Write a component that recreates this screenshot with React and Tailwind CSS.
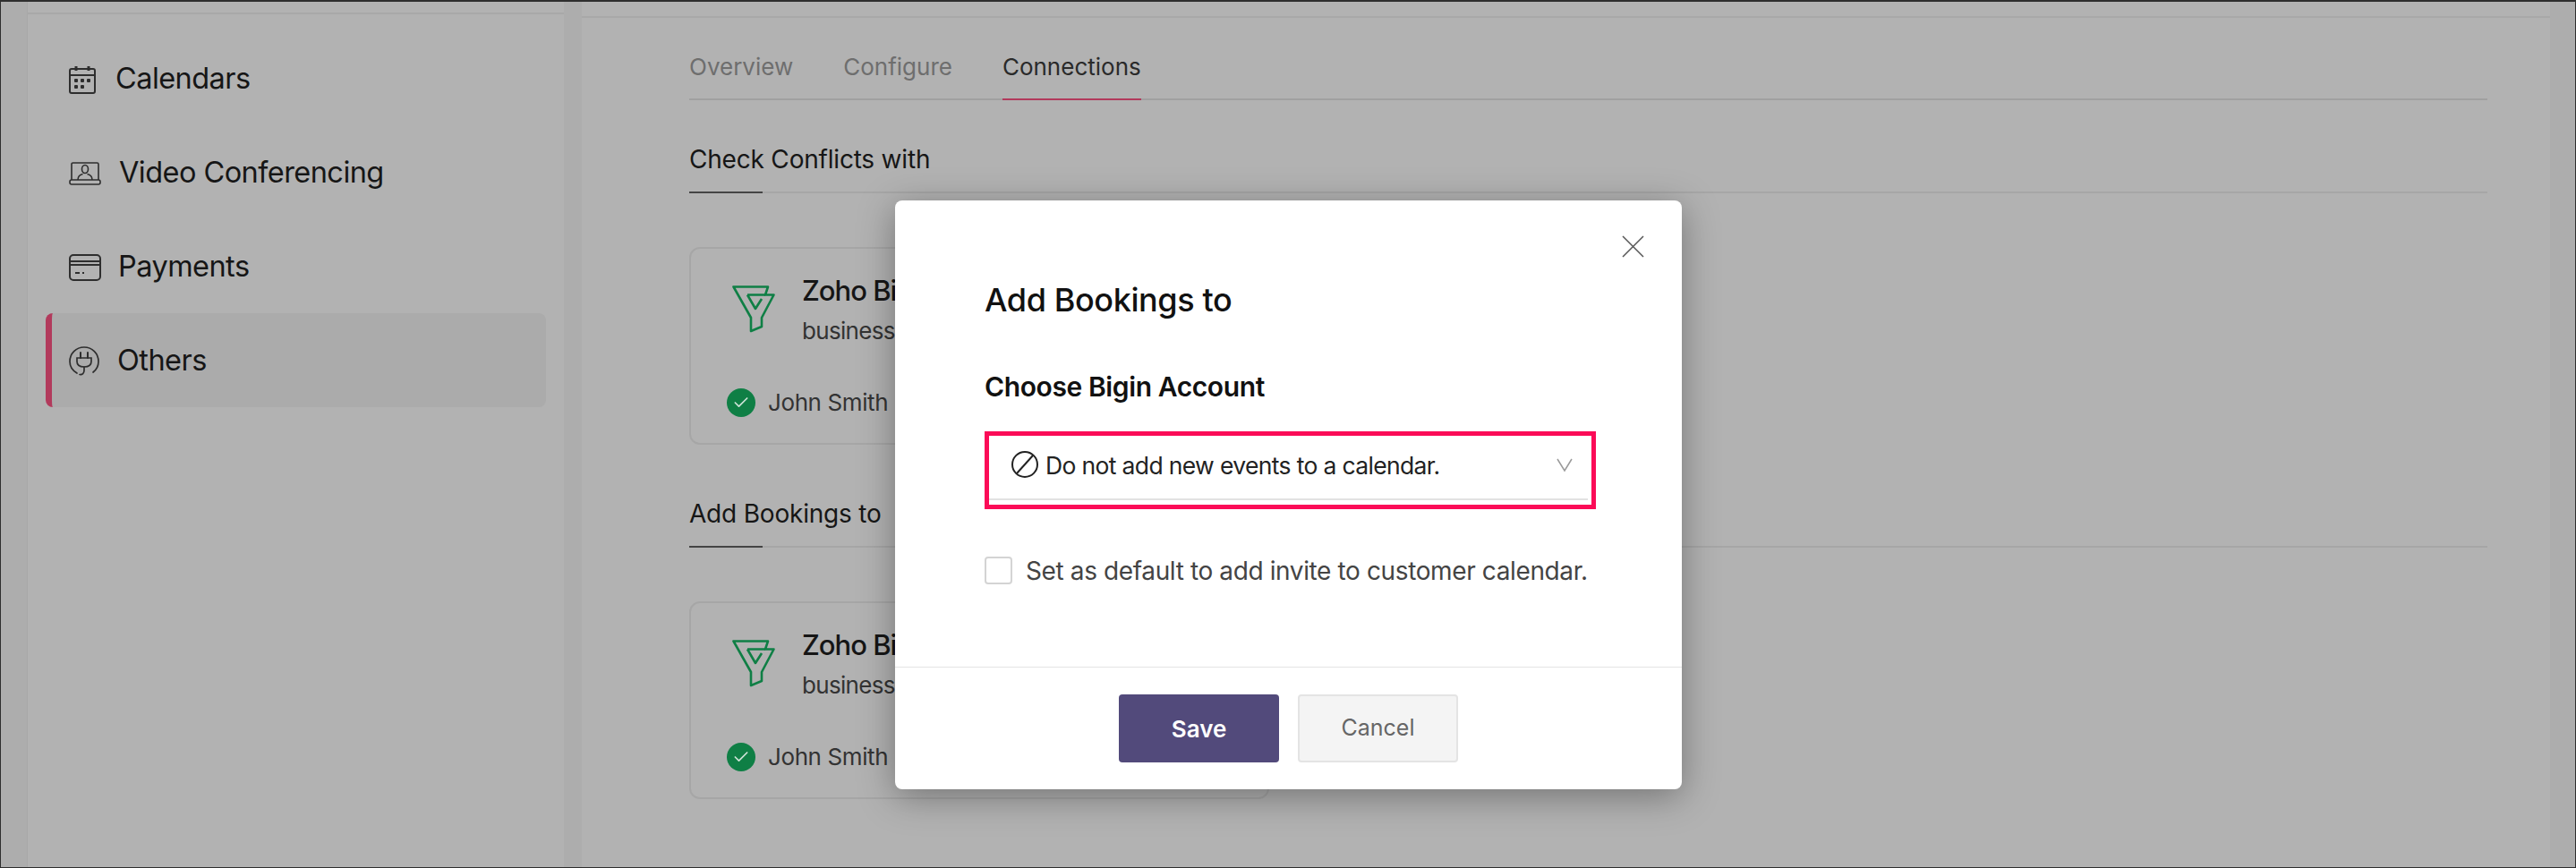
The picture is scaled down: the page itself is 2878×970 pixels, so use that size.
import { Check } from "lucide-react";

const fontStack = { fontFamily: "Inter, 'Liberation Sans', sans-serif" };

function CalendarIcon() {
  return (
    <svg width="30" height="32" viewBox="0 0 30 32" fill="none" stroke="#2e2e2e" strokeWidth="2">
      <rect x="1" y="4" width="28" height="27" rx="2" />
      <path d="M1 11h28" />
      <path d="M8 1v5M22 1v5" strokeWidth="3" />
      <g fill="#2e2e2e" stroke="none">
        <rect x="6" y="15" width="4" height="4" rx="1" />
        <rect x="13" y="15" width="4" height="4" rx="1" />
        <rect x="20" y="15" width="4" height="4" rx="1" />
        <rect x="6" y="22" width="4" height="4" rx="1" />
        <rect x="13" y="22" width="4" height="4" rx="1" />
      </g>
    </svg>
  );
}

function LaptopIcon() {
  return (
    <svg width="36" height="26" viewBox="0 0 36 26" fill="none" stroke="#2e2e2e" strokeWidth="1.6">
      <path d="M3 20V2.500A1.500 1.500 0 0 1 4.500 1h27A1.500 1.500 0 0 1 33 2.500V20" />
      <rect x="1" y="20" width="34" height="5" rx="2" />
      <ellipse cx="18" cy="8" rx="3.500" ry="4.500" />
      <path d="M10 20c0-4 3-6 5.500-6.500M26 20c0-4-3-6-5.500-6.500" />
    </svg>
  );
}

function CardIcon() {
  return (
    <svg width="36" height="30" viewBox="0 0 36 30" fill="none" stroke="#2e2e2e" strokeWidth="2">
      <rect x="1" y="1" width="34" height="28" rx="4" />
      <path d="M1 8h34M1 12h34" />
      <path d="M7 21h5M15 21h2" />
    </svg>
  );
}

function PlugIcon() {
  return (
    <svg width="34" height="33" viewBox="0 0 34 33" fill="none" stroke="#2e2e2e" strokeWidth="1.700" strokeLinecap="round">
      <path d="M9 30C4 27 1 22 1 17 1 8 8 1 17 1s16 7 16 16c0 5-2 9-6 12" />
      <path d="M13 7v6M21 7v6" strokeWidth="2" />
      <path d="M9 13h16v4c0 4-3 6-8 6s-8-2-8-6z" />
      <path d="M17 23v4c0 3-2 5-5 4.500" />
    </svg>
  );
}

function BiginLogo() {
  return (
    <svg width="48" height="54" viewBox="0 0 48 54" fill="none" stroke="#0f7f45" strokeWidth="2.600" strokeLinejoin="round">
      <path d="M1.500 2.500H40L37 11.500H46.500L33 37V47L21 52V37Z" />
      <path d="M17 11.500H37M17 11.500L26 27L33 16" />
    </svg>
  );
}

function SideItem({ icon, label, gap, active }) {
  return (
    <div className={`h-[105px] flex items-center rounded-lg pt-[2px] ${active ? "bg-[#ababab] border-l-[7px] border-[#b23a5c] pl-[19px]" : "pl-[26px]"}`}>
      {icon}
      <span className="text-[32.500px] tracking-[-0.55px] text-[#161616]" style={{ marginLeft: gap }}>{label}</span>
    </div>
  );
}

function SectionHead({ title }) {
  return (
    <div className="relative h-[61px] border-b-2 border-[#a6a6a6]">
      <span className="text-[28px] leading-[40px] tracking-[-0.2px] text-[#161616] block pt-[3px]">{title}</span>
      <div className="absolute left-0 -bottom-[2px] w-[82px] h-[2px] bg-[#444444]" />
    </div>
  );
}

function ConnCard() {
  return (
    <div className="w-[648px] h-[221px] mt-[60px] border-2 border-[#a6a6a6] rounded-xl pt-[27px] pl-[40px]">
      <div className="flex">
        <div className="w-[46px] pt-[13px] ml-[6px]"><BiginLogo /></div>
        <div className="ml-[32px]">
          <div className="text-[31px] leading-[40px] font-medium tracking-[-1px] text-[#161616]">Zoho Bigin</div>
          <div className="text-[26px] leading-[36px] mt-[7px] tracking-[-0.7px] text-[#333333]">business.bigin.com</div>
        </div>
      </div>
      <div className="flex items-center mt-[44px]">
        <div className="w-[32px] h-[32px] rounded-full bg-[#0f7f45] flex items-center justify-center">
          <Check size={20} color="#cfe3d8" strokeWidth={2} />
        </div>
        <span className="ml-[14px] text-[26px] leading-[36px] tracking-[-0.4px] text-[#333333]">John Smith</span>
      </div>
    </div>
  );
}

function Modal() {
  return (
    <div className="absolute left-[1000px] top-[224px] w-[879px] h-[658px] bg-white rounded-lg shadow-[0_8px_40px_rgba(0,0,0,0.35)]">
      <svg className="absolute left-[812px] top-[39px]" width="25" height="25" viewBox="0 0 25 25" stroke="#555555" strokeWidth="1.500">
        <path d="M1 1l23 23M24 1L1 24" />
      </svg>
      <div className="h-[522px] border-b border-[#e4e4e4] pl-[100px] pt-[87px]">
        <div className="text-[36px] leading-[48px] font-medium tracking-[-0.4px] text-[#111111]">Add Bookings to</div>
        <div className="text-[30px] leading-[40px] font-semibold tracking-[-0.4px] text-[#111111] mt-[53px]">Choose Bigin Account</div>
        <div className="relative w-[683px] h-[87px] mt-[30px] border-[5px] border-[#fb0b57] flex pl-[24px] pt-[17px]">
          <div className="absolute left-0 right-[4px] bottom-[5px] h-[2px] bg-[#e2e2e2]" />
          <svg width="32" height="30" viewBox="0 0 32 30" fill="none" stroke="#222222" strokeWidth="2">
            <circle cx="16" cy="15" r="14" />
            <path d="M7 25L25 5" />
          </svg>
          <span className="ml-[7px] text-[26.500px] leading-[32px] tracking-[-0.65px] text-[#222222]">Do not add new events to a calendar.</span>
          <svg className="absolute left-[634px] top-[24px]" width="18" height="17" viewBox="0 0 18 17" fill="none" stroke="#9a9a9a" strokeWidth="1.500">
            <path d="M1 2l8 13 8-13" />
          </svg>
        </div>
        <div className="flex items-center mt-[49px]">
          <div className="w-[31px] h-[31px] rounded border-2 border-[#d4d4d4] bg-white" />
          <span className="ml-[15px] pt-[2px] text-[28px] leading-[36px] tracking-[-0.38px] text-[#444444]">Set as default to add invite to customer calendar.</span>
        </div>
      </div>
      <div className="flex justify-center gap-[21px] pt-[30px]">
        <button className="w-[179px] h-[76px] bg-[#524a7b] rounded text-white text-[26px] font-semibold">Save</button>
        <button className="w-[179px] h-[76px] bg-[#f4f4f4] border-2 border-[#e4e4e4] rounded text-[#666666] text-[25px]">Cancel</button>
      </div>
    </div>
  );
}

export default function App() {
  return (
    <div className="relative w-[2878px] h-[970px] overflow-hidden bg-[#2e2e2e] pt-[2px] pl-[1px] pr-[1px] pb-[1px]" style={fontStack}>
      <div className="flex h-full bg-[#adadad]">
        <div className="w-[29px]" />

        {/* Sidebar */}
        <div className="w-[600px] bg-[#b2b2b2] border-l border-[#a8a8a8]">
          <div className="h-[14px] border-b-2 border-[#a8a8a8]" />
          <div className="pl-[20px] pr-[20px] pt-[19px]">
            <SideItem icon={<CalendarIcon />} label="Calendars" gap="22px" />
            <SideItem icon={<LaptopIcon />} label="Video Conferencing" gap="20px" />
            <SideItem icon={<CardIcon />} label="Payments" gap="19px" />
            <SideItem icon={<PlugIcon />} label="Others" gap="20px" active />
          </div>
        </div>
        <div className="w-[20px]" />

        {/* Main */}
        <div className="w-[2199px] bg-[#b2b2b2]">
          <div className="h-[18px] border-b-2 border-[#a8a8a8]" />
          <div className="pl-[120px] pr-[70px]">
            <div className="flex h-[92px] border-b-2 border-[#a0a0a0] gap-[56px] text-[26px]">
              <div className="pt-[35px] leading-[40px] text-[#6e6e6e]">Overview</div>
              <div className="pt-[35px] leading-[40px] text-[#6e6e6e]">Configure</div>
              <div className="relative pt-[35px] leading-[40px] text-[#2a2a2a]">
                Connections
                <div className="absolute left-0 right-0 -bottom-[2px] h-[2px] bg-[#b23a5c]" />
              </div>
            </div>
            <div className="mt-[43px]"><SectionHead title="Check Conflicts with" /></div>
            <ConnCard />
            <div className="mt-[54px]"><SectionHead title="Add Bookings to" /></div>
            <ConnCard />
          </div>
        </div>
      </div>
      <Modal />
    </div>
  );
}
